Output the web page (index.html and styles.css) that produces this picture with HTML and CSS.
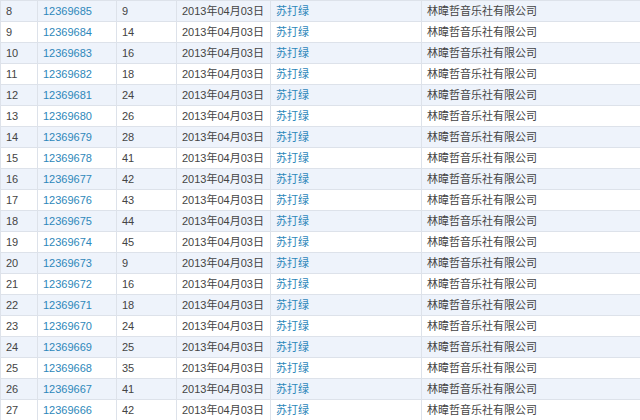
FILE: index.html
```html
<!DOCTYPE html>
<html>
<head>
<meta charset="utf-8">
<link rel="stylesheet" href="styles.css">
</head>
<body>
<table class="grid">
<colgroup><col class="c1"><col class="c2"><col class="c3"><col class="c4"><col class="c5"><col class="c6"></colgroup>
<tbody>
<tr class="alt"><td>8</td><td class="lk">12369685</td><td>9</td><td>2013年04月03日</td><td class="lk">苏打绿</td><td>林暐哲音乐社有限公司</td></tr>
<tr><td>9</td><td class="lk">12369684</td><td>14</td><td>2013年04月03日</td><td class="lk">苏打绿</td><td>林暐哲音乐社有限公司</td></tr>
<tr class="alt"><td>10</td><td class="lk">12369683</td><td>16</td><td>2013年04月03日</td><td class="lk">苏打绿</td><td>林暐哲音乐社有限公司</td></tr>
<tr><td>11</td><td class="lk">12369682</td><td>18</td><td>2013年04月03日</td><td class="lk">苏打绿</td><td>林暐哲音乐社有限公司</td></tr>
<tr class="alt"><td>12</td><td class="lk">12369681</td><td>24</td><td>2013年04月03日</td><td class="lk">苏打绿</td><td>林暐哲音乐社有限公司</td></tr>
<tr><td>13</td><td class="lk">12369680</td><td>26</td><td>2013年04月03日</td><td class="lk">苏打绿</td><td>林暐哲音乐社有限公司</td></tr>
<tr class="alt"><td>14</td><td class="lk">12369679</td><td>28</td><td>2013年04月03日</td><td class="lk">苏打绿</td><td>林暐哲音乐社有限公司</td></tr>
<tr><td>15</td><td class="lk">12369678</td><td>41</td><td>2013年04月03日</td><td class="lk">苏打绿</td><td>林暐哲音乐社有限公司</td></tr>
<tr class="alt"><td>16</td><td class="lk">12369677</td><td>42</td><td>2013年04月03日</td><td class="lk">苏打绿</td><td>林暐哲音乐社有限公司</td></tr>
<tr><td>17</td><td class="lk">12369676</td><td>43</td><td>2013年04月03日</td><td class="lk">苏打绿</td><td>林暐哲音乐社有限公司</td></tr>
<tr class="alt"><td>18</td><td class="lk">12369675</td><td>44</td><td>2013年04月03日</td><td class="lk">苏打绿</td><td>林暐哲音乐社有限公司</td></tr>
<tr><td>19</td><td class="lk">12369674</td><td>45</td><td>2013年04月03日</td><td class="lk">苏打绿</td><td>林暐哲音乐社有限公司</td></tr>
<tr class="alt"><td>20</td><td class="lk">12369673</td><td>9</td><td>2013年04月03日</td><td class="lk">苏打绿</td><td>林暐哲音乐社有限公司</td></tr>
<tr><td>21</td><td class="lk">12369672</td><td>16</td><td>2013年04月03日</td><td class="lk">苏打绿</td><td>林暐哲音乐社有限公司</td></tr>
<tr class="alt"><td>22</td><td class="lk">12369671</td><td>18</td><td>2013年04月03日</td><td class="lk">苏打绿</td><td>林暐哲音乐社有限公司</td></tr>
<tr><td>23</td><td class="lk">12369670</td><td>24</td><td>2013年04月03日</td><td class="lk">苏打绿</td><td>林暐哲音乐社有限公司</td></tr>
<tr class="alt"><td>24</td><td class="lk">12369669</td><td>25</td><td>2013年04月03日</td><td class="lk">苏打绿</td><td>林暐哲音乐社有限公司</td></tr>
<tr><td>25</td><td class="lk">12369668</td><td>35</td><td>2013年04月03日</td><td class="lk">苏打绿</td><td>林暐哲音乐社有限公司</td></tr>
<tr class="alt"><td>26</td><td class="lk">12369667</td><td>41</td><td>2013年04月03日</td><td class="lk">苏打绿</td><td>林暐哲音乐社有限公司</td></tr>
<tr><td>27</td><td class="lk">12369666</td><td>42</td><td>2013年04月03日</td><td class="lk">苏打绿</td><td>林暐哲音乐社有限公司</td></tr>
</tbody>
</table>
</body>
</html>
```
FILE: styles.css
```css
html, body {
  margin: 0;
  padding: 0;
  background: #ffffff;
  overflow: hidden;
}
.grid {
  border-collapse: collapse;
  table-layout: fixed;
  width: 641px;
  font-family: "Liberation Sans", "Noto Sans CJK SC", sans-serif;
  font-size: 11px;
  color: #444444;
}
.c1 { width: 37px; }
.c2 { width: 79px; }
.c3 { width: 60px; }
.c4 { width: 94px; }
.c5 { width: 151px; }
.c6 { width: 220px; }
.grid td {
  height: 20px;
  padding: 0 0 0 5px;
  border: 1px solid #dde2ea;
  white-space: nowrap;
  overflow: hidden;
  line-height: 20px;
  vertical-align: middle;
}
.grid tr.alt td {
  background: #eef3fb;
}
.grid td.lk {
  color: #2d87ba;
}
```
